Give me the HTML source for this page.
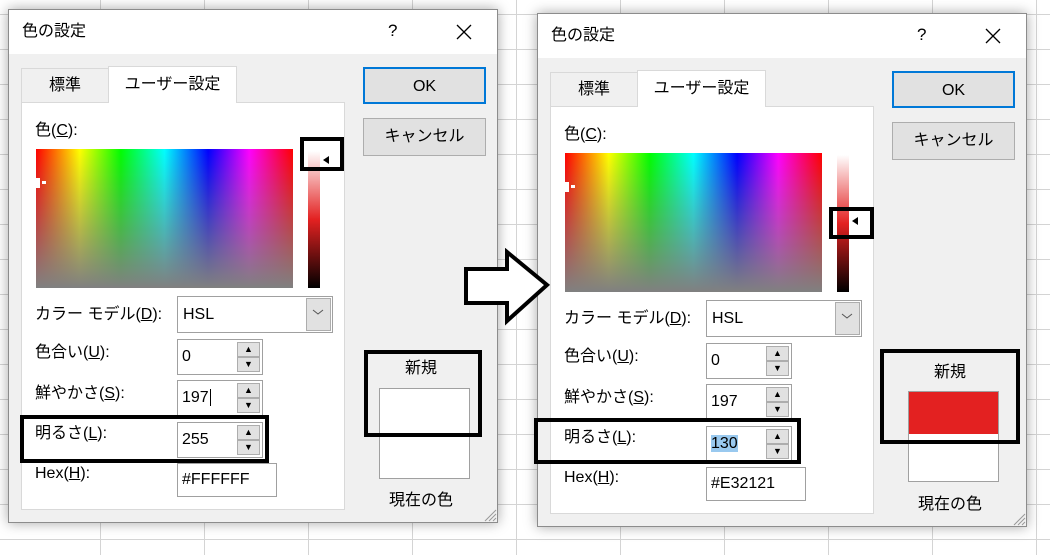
<!DOCTYPE html>
<html><head><meta charset="utf-8"><style>
*{margin:0;padding:0;box-sizing:border-box}
body{width:1050px;height:555px;overflow:hidden;background:#fff;position:relative;font-family:"Liberation Sans","Noto Sans CJK JP",sans-serif;color:#000;
background-image:linear-gradient(90deg,#d4d4d4 1px,transparent 1px),linear-gradient(#d4d4d4 1px,transparent 1px);background-size:104px 100%,100% 35px;background-position:100px 0,0 14px}
.a{position:absolute}
.dlg{position:absolute;width:490px;height:514px;background:#f0f0f0;border:1px solid #8c8c8c;box-shadow:0 0 12px rgba(0,0,0,.35)}
.tb{position:absolute;left:0;top:0;width:488px;height:44px;background:#fff}
.t{position:absolute;font-size:16px;line-height:20px;white-space:nowrap}
.tab{position:absolute;border:1px solid #d9d9d9;border-bottom:none;font-size:16px;text-align:center}
.panel{position:absolute;left:12px;top:92px;width:324px;height:408px;background:#fff;border:1px solid #d9d9d9}
.spec{position:absolute;left:27px;top:139px;width:257px;height:139px;background:linear-gradient(rgba(128,128,128,0),#808080),linear-gradient(90deg,#f00,#ff0 17%,#0f0 33%,#0ff 50%,#00f 67%,#f0f 83%,#f00)}
.sl{position:absolute;left:299px;top:141px;width:12px;height:137px;background:linear-gradient(#fff,#e32121 50%,#000)}
.btn{position:absolute;left:354px;width:123px;background:#e1e1e1;border:1px solid #adadad;font-size:16px;text-align:center}
.box{position:absolute;background:#fff;border:1px solid #a0a0a0;font-size:16px;padding-left:4px}
.sp{position:absolute;left:228px;width:23px;height:15px;background:#e1e1e1;border:1px solid #adadad;font-size:9px;text-align:center;line-height:13px}
.blk{position:absolute;border:4px solid #000}
u{text-decoration:underline}
</style></head><body>

<!-- LEFT -->
<div class="dlg" style="left:8px;top:9px">
<div class="tb"></div>
<div class="t" style="left:13px;top:12px">色の設定</div>
<div class="t" style="left:379px;top:11px;font-size:17px">?</div>
<svg class="a" style="left:446px;top:13px" width="18" height="18"><path d="M2 2L16 16M16 2L2 16" stroke="#000" stroke-width="1.3"/></svg>
<div class="tab" style="left:12px;top:58px;width:88px;height:34px;line-height:34px;background:#f0f0f0">標準</div>
<div class="panel"></div>
<div class="tab" style="left:99px;top:56px;width:129px;height:37px;line-height:36px;background:#fff;z-index:2">ユーザー設定</div>
<div class="t" style="left:26px;top:111px">色(<u>C</u>):</div>
<div class="spec"></div>
<div class="a" style="left:27px;top:168px;width:4px;height:10px;background:#fff"></div>
<div class="a" style="left:33px;top:171px;width:4px;height:3px;background:#fff"></div>
<div class="sl"></div>
<div class="a" style="left:314px;top:146px;width:0;height:0;border-top:4px solid transparent;border-bottom:4px solid transparent;border-right:6px solid #000"></div>
<div class="btn" style="top:57px;height:37px;line-height:35px;border:2px solid #0078d7">OK</div>
<div class="btn" style="top:108px;height:38px;line-height:36px">キャンセル</div>
<div class="t" style="left:26px;top:295px">カラー モデル(<u>D</u>):</div>
<div class="box" style="left:168px;top:286px;width:156px;height:37px;line-height:35px;padding-left:5px">HSL</div>
<div class="a" style="left:297px;top:288px;width:25px;height:33px;background:#e1e1e1;border:1px solid #adadad"></div>
<svg class="a" style="left:303px;top:298px" width="12" height="8"><path d="M1 2L6 6L11 2" stroke="#555" fill="none"/></svg>
<div class="t" style="left:26px;top:333px">色合い(<u>U</u>):</div>
<div class="t" style="left:26px;top:374px">鮮やかさ(<u>S</u>):</div>
<div class="t" style="left:26px;top:414px">明るさ(<u>L</u>):</div>
<div class="t" style="left:26px;top:454px">Hex(<u>H</u>):</div>
<div class="box" style="left:168px;top:329px;width:86px;height:36px;line-height:34px">0</div>
<div class="sp" style="top:332px">▲</div><div class="sp" style="top:347px">▼</div>
<div class="box" style="left:168px;top:370px;width:86px;height:36px;line-height:34px">197<span style="border-left:1px solid #000;margin-left:1px"></span></div>
<div class="sp" style="top:373px">▲</div><div class="sp" style="top:388px">▼</div>
<div class="box" style="left:168px;top:412px;width:86px;height:36px;line-height:34px">255</div>
<div class="sp" style="top:415px">▲</div><div class="sp" style="top:430px">▼</div>
<div class="box" style="left:168px;top:453px;width:100px;height:34px;line-height:32px">#FFFFFF</div>
<div class="t" style="left:396px;top:349px">新規</div>
<div class="a" style="left:370px;top:378px;width:91px;height:91px;background:#fff;border:1px solid #a0a0a0"></div>
<div class="t" style="left:380px;top:481px">現在の色</div>
<svg class="a" style="left:474px;top:498px" width="14" height="14"><path d="M2 13L13 2M6 13L13 6M10 13L13 10" stroke="#999"/></svg>
</div>
<div class="blk" style="left:300px;top:137px;width:44px;height:34px"></div>
<div class="blk" style="left:20px;top:415px;width:249px;height:48px"></div>
<div class="blk" style="left:364px;top:350px;width:118px;height:87px"></div>

<!-- RIGHT -->
<div class="dlg" style="left:537px;top:13px">
<div class="tb"></div>
<div class="t" style="left:13px;top:12px">色の設定</div>
<div class="t" style="left:379px;top:11px;font-size:17px">?</div>
<svg class="a" style="left:446px;top:13px" width="18" height="18"><path d="M2 2L16 16M16 2L2 16" stroke="#000" stroke-width="1.3"/></svg>
<div class="tab" style="left:12px;top:58px;width:88px;height:34px;line-height:34px;background:#f0f0f0">標準</div>
<div class="panel"></div>
<div class="tab" style="left:99px;top:56px;width:129px;height:37px;line-height:36px;background:#fff;z-index:2">ユーザー設定</div>
<div class="t" style="left:26px;top:111px">色(<u>C</u>):</div>
<div class="spec"></div>
<div class="a" style="left:27px;top:168px;width:4px;height:10px;background:#fff"></div>
<div class="a" style="left:33px;top:171px;width:4px;height:3px;background:#fff"></div>
<div class="sl"></div>
<div class="a" style="left:314px;top:203px;width:0;height:0;border-top:4px solid transparent;border-bottom:4px solid transparent;border-right:6px solid #000"></div>
<div class="btn" style="top:57px;height:37px;line-height:35px;border:2px solid #0078d7">OK</div>
<div class="btn" style="top:108px;height:38px;line-height:36px">キャンセル</div>
<div class="t" style="left:26px;top:295px">カラー モデル(<u>D</u>):</div>
<div class="box" style="left:168px;top:286px;width:156px;height:37px;line-height:35px;padding-left:5px">HSL</div>
<div class="a" style="left:297px;top:288px;width:25px;height:33px;background:#e1e1e1;border:1px solid #adadad"></div>
<svg class="a" style="left:303px;top:298px" width="12" height="8"><path d="M1 2L6 6L11 2" stroke="#555" fill="none"/></svg>
<div class="t" style="left:26px;top:333px">色合い(<u>U</u>):</div>
<div class="t" style="left:26px;top:374px">鮮やかさ(<u>S</u>):</div>
<div class="t" style="left:26px;top:414px">明るさ(<u>L</u>):</div>
<div class="t" style="left:26px;top:454px">Hex(<u>H</u>):</div>
<div class="box" style="left:168px;top:329px;width:86px;height:36px;line-height:34px">0</div>
<div class="sp" style="top:332px">▲</div><div class="sp" style="top:347px">▼</div>
<div class="box" style="left:168px;top:370px;width:86px;height:36px;line-height:34px">197</div>
<div class="sp" style="top:373px">▲</div><div class="sp" style="top:388px">▼</div>
<div class="box" style="left:168px;top:412px;width:86px;height:36px;line-height:34px"><span style="background:#99c9ef">130</span></div>
<div class="sp" style="top:415px">▲</div><div class="sp" style="top:430px">▼</div>
<div class="box" style="left:168px;top:453px;width:100px;height:34px;line-height:32px">#E32121</div>
<div class="t" style="left:396px;top:349px">新規</div>
<div class="a" style="left:370px;top:377px;width:91px;height:91px;background:#fff;border:1px solid #a0a0a0"><div style="height:42px;background:#e32121"></div></div>
<div class="t" style="left:380px;top:481px">現在の色</div>
<svg class="a" style="left:474px;top:498px" width="14" height="14"><path d="M2 13L13 2M6 13L13 6M10 13L13 10" stroke="#999"/></svg>
</div>
<div class="blk" style="left:829px;top:207px;width:45px;height:32px"></div>
<div class="blk" style="left:534px;top:418px;width:267px;height:46px"></div>
<div class="blk" style="left:880px;top:349px;width:140px;height:95px"></div>

<!-- ARROW -->
<svg class="a" style="left:460px;top:248px" width="95" height="80"><path d="M6 21H47V4L87 37L47 73V55H6Z" fill="#fff" stroke="#000" stroke-width="4" stroke-linejoin="miter"/></svg>
</body></html>
